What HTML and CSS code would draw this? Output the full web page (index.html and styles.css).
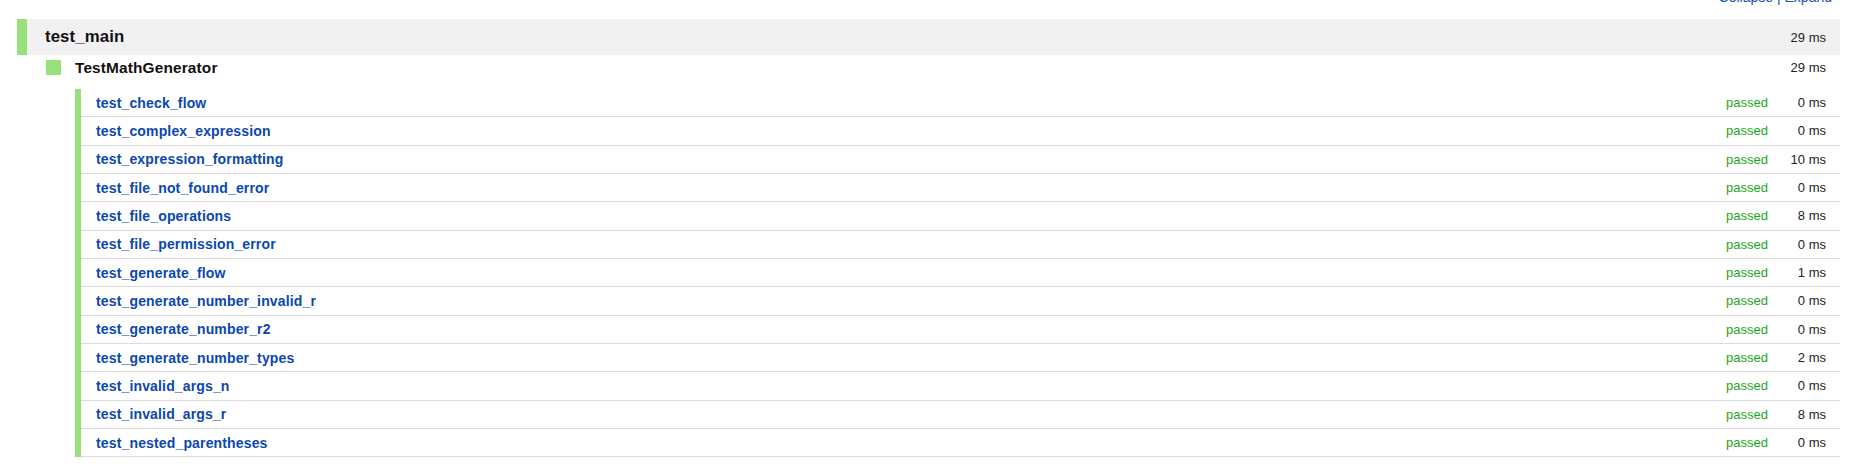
FILE: index.html
```html
<!DOCTYPE html>
<html>
<head>
<meta charset="utf-8">
<link rel="stylesheet" href="styles.css">
</head>
<body>
<div class="toplinks"><a class="lnk" href="#">Collapse</a> | <a class="lnk" href="#">Expand</a></div>
<div class="suite">
  <span class="suite-name">test_main</span>
  <span class="time">29 ms</span>
</div>
<div class="cls">
  <span class="sq"></span>
  <span class="cls-name">TestMathGenerator</span>
  <span class="time">29 ms</span>
</div>
<div class="tests">
  <div class="row"><a class="tname" href="#">test_check_flow</a><span class="status">passed</span><span class="dur">0 ms</span></div>
  <div class="row"><a class="tname" href="#">test_complex_expression</a><span class="status">passed</span><span class="dur">0 ms</span></div>
  <div class="row"><a class="tname" href="#">test_expression_formatting</a><span class="status">passed</span><span class="dur">10 ms</span></div>
  <div class="row"><a class="tname" href="#">test_file_not_found_error</a><span class="status">passed</span><span class="dur">0 ms</span></div>
  <div class="row"><a class="tname" href="#">test_file_operations</a><span class="status">passed</span><span class="dur">8 ms</span></div>
  <div class="row"><a class="tname" href="#">test_file_permission_error</a><span class="status">passed</span><span class="dur">0 ms</span></div>
  <div class="row"><a class="tname" href="#">test_generate_flow</a><span class="status">passed</span><span class="dur">1 ms</span></div>
  <div class="row"><a class="tname" href="#">test_generate_number_invalid_r</a><span class="status">passed</span><span class="dur">0 ms</span></div>
  <div class="row"><a class="tname" href="#">test_generate_number_r2</a><span class="status">passed</span><span class="dur">0 ms</span></div>
  <div class="row"><a class="tname" href="#">test_generate_number_types</a><span class="status">passed</span><span class="dur">2 ms</span></div>
  <div class="row"><a class="tname" href="#">test_invalid_args_n</a><span class="status">passed</span><span class="dur">0 ms</span></div>
  <div class="row"><a class="tname" href="#">test_invalid_args_r</a><span class="status">passed</span><span class="dur">8 ms</span></div>
  <div class="row"><a class="tname" href="#">test_nested_parentheses</a><span class="status">passed</span><span class="dur">0 ms</span></div>
</div>
</body>
</html>
```
FILE: styles.css
```css
html, body {
  margin: 0;
  padding: 0;
  background: #fff;
}
body {
  font-family: "Liberation Sans", Arial, sans-serif;
  color: #222;
  font-size: 13px;
}
.toplinks {
  margin-top: -11px;
  height: 30px;
  line-height: 16px;
  font-size: 14px;
  text-align: right;
  padding-right: 23px;
  color: #1a4fb5;
}
.lnk {
  color: #1a4fb5;
  text-decoration: none;
}
.suite {
  display: flex;
  align-items: center;
  height: 36px;
  margin: 0 15px 0 17px;
  background: #f1f1f1;
  border-left: 10px solid #97e07b;
  padding: 0 14px 0 18px;
}
.suite-name {
  flex: 1;
  font-weight: bold;
  font-size: 16.8px;
  letter-spacing: 0.1px;
  color: #111;
}
.time {
  font-size: 13px;
  color: #222;
}
.cls {
  display: flex;
  align-items: center;
  height: 25px;
  margin: 0 15px 0 46px;
  padding: 0 14px 9px 0;
}
.sq {
  width: 15px;
  height: 15px;
  background: #97e07b;
  margin-right: 14px;
}
.cls-name {
  flex: 1;
  font-weight: bold;
  font-size: 15.4px;
  letter-spacing: 0.15px;
  color: #111;
}
.tests {
  margin: 0 15px 0 75px;
  border-left: 6px solid #97e07b;
}
.row {
  box-sizing: border-box;
  display: flex;
  align-items: center;
  height: 28.33px;
  border-bottom: 1px solid #dcdcdc;
  padding: 0 14px 0 15px;
}
.tname {
  flex: 1;
  font-weight: bold;
  font-size: 14px;
  letter-spacing: 0.15px;
  color: #0b47b0;
  text-decoration: none;
}
.status {
  color: #22a822;
  font-size: 13px;
}
.dur {
  width: 58px;
  text-align: right;
  font-size: 13px;
  color: #222;
}
```
